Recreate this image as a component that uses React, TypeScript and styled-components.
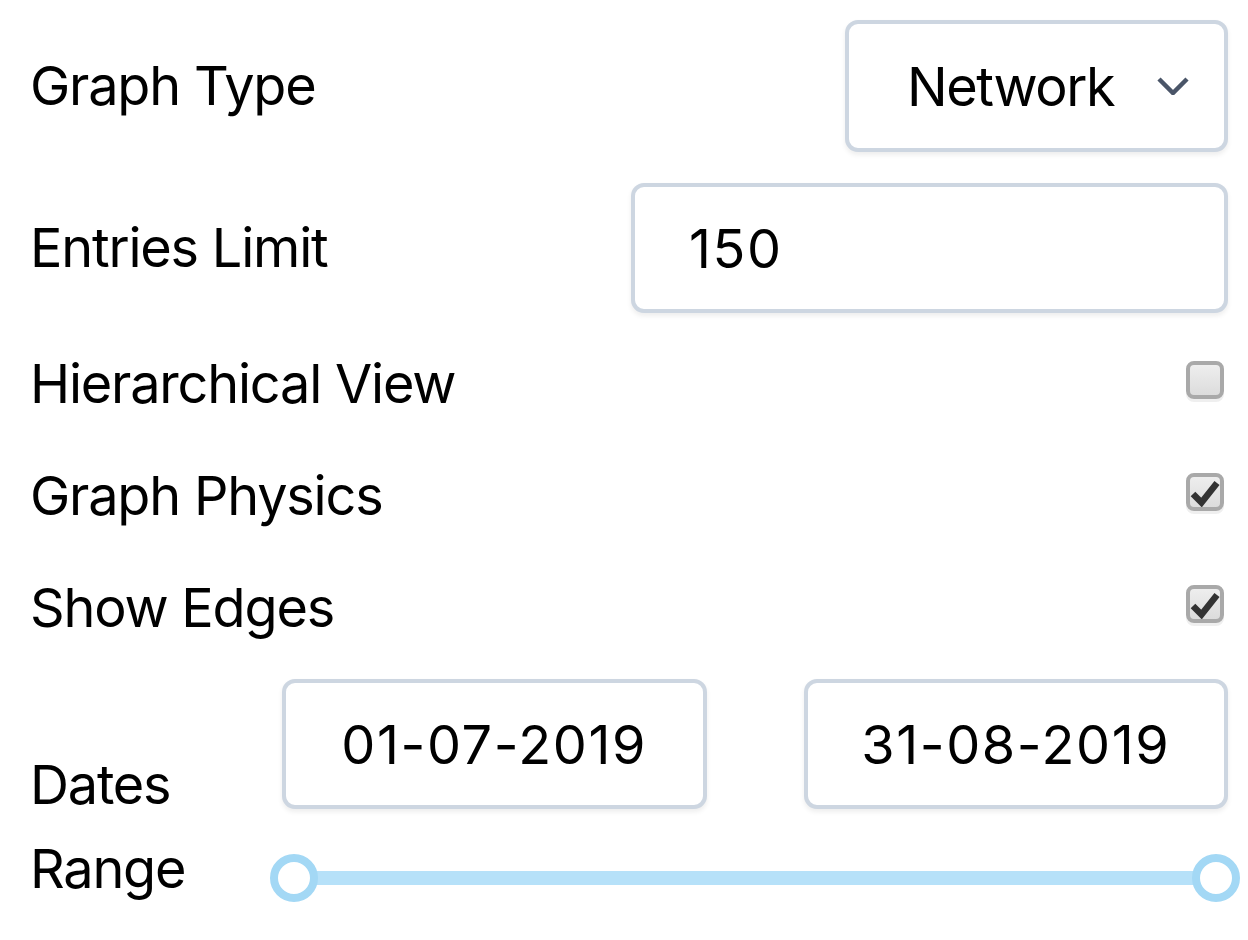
import React from "react";
import styled, { createGlobalStyle } from "styled-components";

const Global = createGlobalStyle`
  html, body { margin: 0; padding: 0; background: #ffffff; }
  body { font-family: Inter, "Noto Sans", sans-serif; color: #000; }
  * { box-sizing: border-box; }
`;

const Panel = styled.div`
  width: 1248px;
  padding: 20px 20px 0 30px;
  display: flex;
  flex-direction: column;
`;

const Row = styled.div<{ $h: number; $mt?: number }>`
  height: ${(p) => p.$h}px;
  margin-top: ${(p) => p.$mt ?? 0}px;
  display: flex;
  align-items: center;
  justify-content: space-between;
`;

const Label = styled.label`
  font-size: 54px;
  line-height: 1;
  letter-spacing: -1.2px;
  color: #000;
  white-space: nowrap;
`;

const fieldBox = `
  border: 4px solid #cdd6e1;
  border-radius: 13px;
  background: #fff;
  box-shadow: 0 3px 5px rgba(0, 0, 0, 0.07);
  font-family: Inter, "Noto Sans", sans-serif;
  font-size: 54px;
  color: #000;
`;

const SelectBox = styled.div`
  ${fieldBox}
  width: 383px;
  height: 132px;
  display: flex;
  align-items: center;
  justify-content: space-between;
  padding: 0 35px 0 58px;
  letter-spacing: -1.4px;
  cursor: pointer;
`;

const TextInput = styled.input<{ $center?: boolean }>`
  ${fieldBox}
  width: 100%;
  min-width: 0;
  height: 130px;
  padding: 0 0 0 ${(p) => (p.$center ? 0 : 54)}px;
  text-align: ${(p) => (p.$center ? "center" : "left")};
  letter-spacing: 1.6px;
  outline: none;
`;

const LimitField = styled.div`
  width: 597px;
  display: flex;
`;

const CheckBox = styled.span`
  width: 38px;
  height: 38px;
  margin: 0 4px 8px 0;
  border: 4px solid #a9a9a9;
  border-radius: 8px;
  background: linear-gradient(#eeeeee, #dcdcdc);
  box-shadow: 0 3px 0 #efefef;
  display: flex;
  align-items: center;
  justify-content: center;
`;

const DateGrid = styled.div`
  margin-top: 15px;
  display: grid;
  grid-template-columns: 155px 1fr 1fr;
  column-gap: 97px;
  grid-template-rows: 130px 48px;
  row-gap: 45px;
  align-items: center;
`;

const DatesLabel = styled(Label)`
  align-self: end;
  margin-bottom: -3px;
`;

const RangeLabel = styled(Label)`
  padding-bottom: 18px;
`;

const SliderArea = styled.div`
  grid-column: 2 / 4;
  height: 48px;
  display: flex;
  align-items: center;
  padding: 0 12px;
`;

const Track = styled.div`
  position: relative;
  flex: 1;
  height: 14px;
  background: #b6e1f9;
`;

const Handle = styled.span<{ $side: "left" | "right" }>`
  position: absolute;
  top: 50%;
  ${(p) => p.$side}: -24px;
  width: 48px;
  height: 48px;
  margin-top: -24px;
  border-radius: 50%;
  border: 8px solid #a3d8f5;
  background: #fff;
`;

const Check = () => (
  <svg width="30" height="30" viewBox="0 0 30 30">
    <path d="M3 17 L11.5 25.5 L27 6" fill="none" stroke="#333" strokeWidth="6.5" strokeLinejoin="miter" />
  </svg>
);

const Chevron = () => (
  <svg width="32" height="18" viewBox="0 0 32 18">
    <polyline points="2,2 16,16 30,2" fill="none" stroke="#4a5568" strokeWidth="4.5" />
  </svg>
);

export default function App() {
  return (
    <>
      <Global />
      <Panel>
        <Row $h={132}>
          <Label>Graph Type</Label>
          <SelectBox>
            <span>Network</span>
            <Chevron />
          </SelectBox>
        </Row>
        <Row $h={130} $mt={31}>
          <Label>Entries Limit</Label>
          <LimitField>
            <TextInput defaultValue="150" />
          </LimitField>
        </Row>
        <Row $h={112} $mt={15}>
          <Label>Hierarchical View</Label>
          <CheckBox />
        </Row>
        <Row $h={112}>
          <Label>Graph Physics</Label>
          <CheckBox>
            <Check />
          </CheckBox>
        </Row>
        <Row $h={112}>
          <Label>Show Edges</Label>
          <CheckBox>
            <Check />
          </CheckBox>
        </Row>
        <DateGrid>
          <DatesLabel>Dates</DatesLabel>
          <TextInput $center defaultValue="01-07-2019" />
          <TextInput $center defaultValue="31-08-2019" />
          <RangeLabel>Range</RangeLabel>
          <SliderArea>
            <Track>
              <Handle $side="left" />
              <Handle $side="right" />
            </Track>
          </SliderArea>
        </DateGrid>
      </Panel>
    </>
  );
}
